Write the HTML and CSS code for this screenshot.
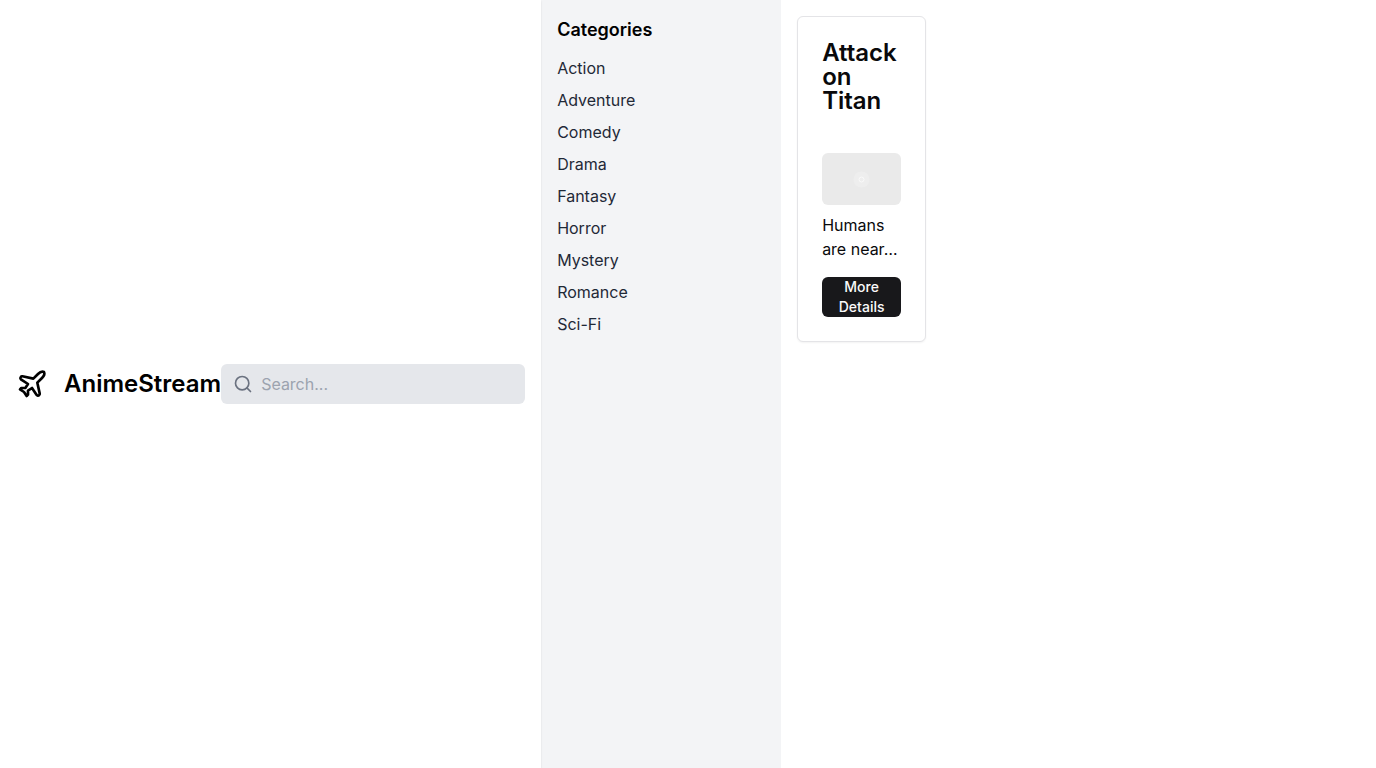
FILE: index.html
```html
<!DOCTYPE html>
<html lang="en">
<head>
<meta charset="utf-8">
<meta name="viewport" content="width=device-width, initial-scale=1">
<title>AnimeStream</title>
<link rel="stylesheet" href="styles.css">
</head>
<body>
<div class="app">
  <header class="header">
    <div class="brand">
      <svg class="brand-icon" viewBox="0 0 24 24" aria-hidden="true"><path d="M17.8 19.2 16 11l3.5-3.5C21 6 21.5 4 21 3c-1-.5-3 0-4.5 1.5L13 8 4.8 6.2c-.5-.1-.9.1-1.1.5l-.3.5c-.2.5-.1 1 .3 1.3L9 12l-2 3H4l-1 1 3 2 2 3 1-1v-3l3-2 3.5 5.3c.3.4.8.5 1.3.3l.5-.2c.4-.3.6-.7.5-1.2z"/></svg>
      <h1 class="brand-name">AnimeStream</h1>
    </div>
    <div class="search">
      <svg class="search-icon" viewBox="0 0 24 24" aria-hidden="true"><circle cx="11" cy="11" r="8"/><path d="m21 21-4.3-4.3"/></svg>
      <input class="search-input" type="search" placeholder="Search..." aria-label="Search">
    </div>
  </header>
  <aside class="sidebar">
    <h2 class="sidebar-title">Categories</h2>
    <ul class="categories">
      <li><a class="category" href="#">Action</a></li>
      <li><a class="category" href="#">Adventure</a></li>
      <li><a class="category" href="#">Comedy</a></li>
      <li><a class="category" href="#">Drama</a></li>
      <li><a class="category" href="#">Fantasy</a></li>
      <li><a class="category" href="#">Horror</a></li>
      <li><a class="category" href="#">Mystery</a></li>
      <li><a class="category" href="#">Romance</a></li>
      <li><a class="category" href="#">Sci-Fi</a></li>
    </ul>
  </aside>
  <main class="content">
    <article class="card">
      <h3 class="card-title">Attack on Titan</h3>
      <div class="card-body">
        <svg class="cover" viewBox="0 0 79 52" role="img" aria-label="Attack on Titan cover"><rect width="79" height="52" fill="#eaeaea"/><circle cx="39.5" cy="26.5" r="8" fill="#eeeeee"/><circle cx="39.5" cy="26.5" r="2.5" fill="none" stroke="#fafafa"/></svg>
        <p class="summary">Humans are near…</p>
        <button class="details" type="button">More Details</button>
      </div>
    </article>
  </main>
</div>
</body>
</html>
```
FILE: styles.css
```css
*, *::before, *::after { box-sizing: border-box; }
body { margin: 0; background: #fff; color: #09090b; font: 16px/24px Inter, "Liberation Sans", sans-serif; }
h1, h2, h3, p, ul { margin: 0; padding: 0; }
ul { list-style: none; }
.app { display: flex; min-height: 100vh; }
.header { position: relative; z-index: 1; display: flex; align-items: center; padding: 16px; box-shadow: 0 1px 2px rgba(0,0,0,.1); }
.brand { display: flex; align-items: center; gap: 16px; }
.brand-icon { width: 32px; height: 32px; fill: none; stroke: #000; stroke-width: 2; stroke-linecap: round; stroke-linejoin: round; }
.brand-name { font-size: 24px; line-height: 32px; font-weight: 600; color: #000; }
.search { display: flex; align-items: center; gap: 8px; width: 304px; height: 40px; padding: 0 12px; border-radius: 6px; background: #e5e7eb; }
.search-icon { width: 20px; height: 20px; flex: none; fill: none; stroke: #6b7280; stroke-width: 2; stroke-linecap: round; stroke-linejoin: round; }
.search-input { flex: 1; min-width: 0; padding: 0; border: 0; outline: 0; background: transparent; color: #374151; font: inherit; appearance: none; }
.search-input::placeholder { color: #9ca3af; opacity: 1; }
.sidebar { width: 240px; flex: none; padding: 16px; background: #f3f4f6; }
.sidebar-title { margin-bottom: 12px; font-size: 18px; line-height: 28px; font-weight: 600; color: #000; }
.categories { display: grid; gap: 8px; }
.category { display: block; color: #1f2937; text-decoration: none; }
.content { flex: 1; padding: 16px; }
.card { width: 129px; border: 1px solid #e4e4e7; border-radius: 6px; background: #fff; box-shadow: 0 1px 2px rgba(0,0,0,.05); }
.card-title { padding: 24px; font-size: 24px; line-height: 24px; font-weight: 600; }
.card-body { padding: 16px 24px 24px; }
.cover { display: block; width: 100%; border-radius: 6px; }
.summary { margin: 8px 0 16px; }
.details { display: flex; align-items: center; justify-content: center; width: 100%; height: 40px; padding: 0 8px; border: 0; border-radius: 6px; background: #18181b; color: #fafafa; font: 500 14px/20px Inter, "Liberation Sans", sans-serif; cursor: pointer; }
```
